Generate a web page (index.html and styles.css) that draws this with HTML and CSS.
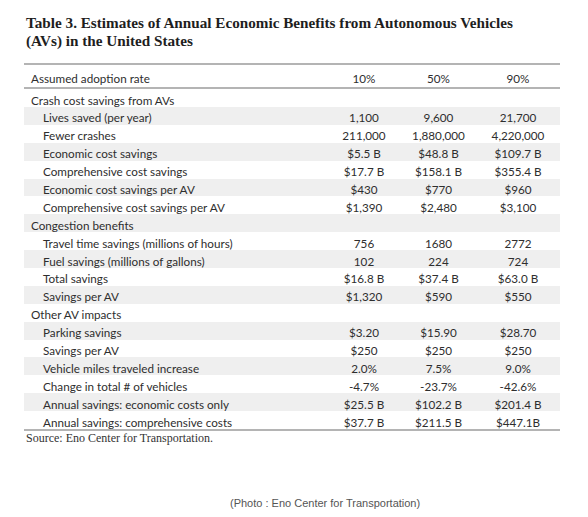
FILE: index.html
```html
<!DOCTYPE html>
<html>
<head>
<meta charset="utf-8">
<link rel="stylesheet" href="styles.css">
</head>
<body>
<div class="page">
  <h1 class="title">Table 3. Estimates of Annual Economic Benefits from Autonomous Vehicles<br>(AVs) in the United States</h1>
  <div class="table">
    <div class="row head"><span class="lab">Assumed adoption rate</span><span>10%</span><span>50%</span><span>90%</span></div>
    <div class="row group first"><span class="lab">Crash cost savings from AVs</span><span></span><span></span><span></span></div>
    <div class="row sub alt"><span class="lab">Lives saved (per year)</span><span>1,100</span><span>9,600</span><span>21,700</span></div>
    <div class="row sub"><span class="lab">Fewer crashes</span><span>211,000</span><span>1,880,000</span><span>4,220,000</span></div>
    <div class="row sub alt"><span class="lab">Economic cost savings</span><span>$5.5 B</span><span>$48.8 B</span><span>$109.7 B</span></div>
    <div class="row sub"><span class="lab">Comprehensive cost savings</span><span>$17.7 B</span><span>$158.1 B</span><span>$355.4 B</span></div>
    <div class="row sub alt"><span class="lab">Economic cost savings per AV</span><span>$430</span><span>$770</span><span>$960</span></div>
    <div class="row sub"><span class="lab">Comprehensive cost savings per AV</span><span>$1,390</span><span>$2,480</span><span>$3,100</span></div>
    <div class="row group alt"><span class="lab">Congestion benefits</span><span></span><span></span><span></span></div>
    <div class="row sub"><span class="lab">Travel time savings (millions of hours)</span><span>756</span><span>1680</span><span>2772</span></div>
    <div class="row sub alt"><span class="lab">Fuel savings (millions of gallons)</span><span>102</span><span>224</span><span>724</span></div>
    <div class="row sub"><span class="lab">Total savings</span><span>$16.8 B</span><span>$37.4 B</span><span>$63.0 B</span></div>
    <div class="row sub alt"><span class="lab">Savings per AV</span><span>$1,320</span><span>$590</span><span>$550</span></div>
    <div class="row group"><span class="lab">Other AV impacts</span><span></span><span></span><span></span></div>
    <div class="row sub alt"><span class="lab">Parking savings</span><span>$3.20</span><span>$15.90</span><span>$28.70</span></div>
    <div class="row sub"><span class="lab">Savings per AV</span><span>$250</span><span>$250</span><span>$250</span></div>
    <div class="row sub alt"><span class="lab">Vehicle miles traveled increase</span><span>2.0%</span><span>7.5%</span><span>9.0%</span></div>
    <div class="row sub"><span class="lab">Change in total # of vehicles</span><span>-4.7%</span><span>-23.7%</span><span>-42.6%</span></div>
    <div class="row sub alt"><span class="lab">Annual savings: economic costs only</span><span>$25.5 B</span><span>$102.2 B</span><span>$201.4 B</span></div>
    <div class="row sub last"><span class="lab">Annual savings: comprehensive costs</span><span>$37.7 B</span><span>$211.5 B</span><span>$447.1B</span></div>
  </div>
  <p class="source">Source: Eno Center for Transportation.</p>
  <p class="caption">(Photo : Eno Center for Transportation)</p>
</div>
</body>
</html>
```
FILE: styles.css
```css
* { box-sizing: border-box; }
html, body { margin: 0; padding: 0; background: #fff; }
.page {
  width: 588px;
  padding: 14px 0 0 24px;
}
.title {
  margin: 0 0 0 2px;
  font-family: "Liberation Serif", "DejaVu Serif", serif;
  font-weight: bold;
  font-size: 15.2px;
  line-height: 18px;
  color: #1e1e1e;
  white-space: nowrap;
}
.table {
  margin-top: 13px;
  width: 536px;
  border-top: 2px solid #b4b4b4;
  border-bottom: 2px solid #b4b4b4;
  font-family: Lato, "Open Sans", sans-serif;
  font-size: 11.7px;
  color: #2e2e2e;
}
.row {
  display: grid;
  grid-template-columns: 303px 74px 75px 84px;
  align-items: center;
  height: 17.9px;
  padding-top: 3px;
}
.row span { text-align: center; white-space: nowrap; }
.row span.lab { text-align: left; }
.row.head {
  height: 24px;
  border-bottom: 2px solid #b4b4b4;
}
.row.head .lab, .row.group .lab { padding-left: 7px; }
.row.sub .lab { padding-left: 19px; }
.row.first { height: 18px; }
.row.alt { background: #efefef; }
.source {
  margin: 0 0 0 2px;
  font-family: "Liberation Serif", "DejaVu Serif", serif;
  font-size: 12px;
  line-height: 14px;
  color: #333;
}
.caption {
  margin: 52px 0 0 206px;
  font-family: "Liberation Sans", Arial, sans-serif;
  font-size: 11px;
  line-height: 12px;
  color: #555;
}
```
